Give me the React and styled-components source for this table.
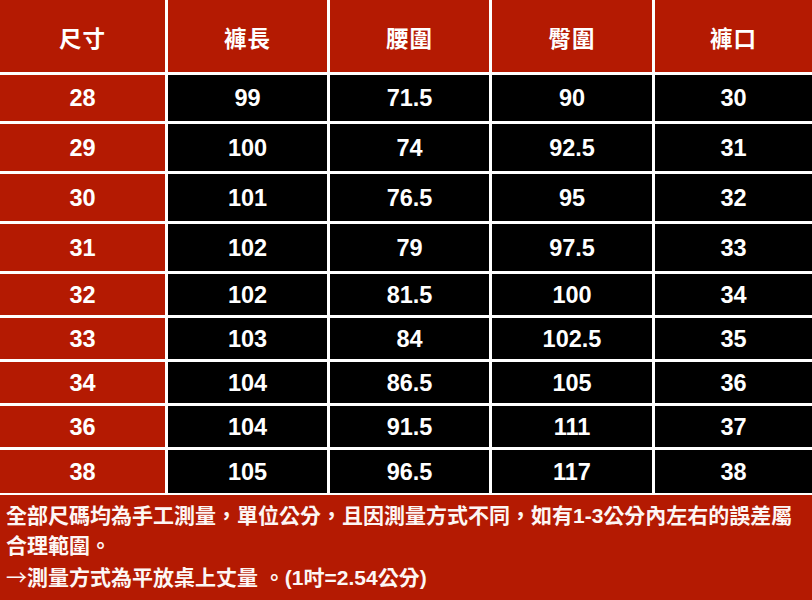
import React from 'react';
import styled, { createGlobalStyle } from 'styled-components';

const RED = '#b41a02';

const GlobalStyle = createGlobalStyle`
  html, body {
    margin: 0;
    padding: 0;
    background: ${RED};
  }
  body {
    font-family: "Liberation Sans", "Noto Sans CJK TC", sans-serif;
    -webkit-font-smoothing: antialiased;
  }
`;

const Page = styled.div`
  width: 812px;
  height: 600px;
  background: ${RED};
  display: flex;
  flex-direction: column;
  overflow: hidden;
`;

const Table = styled.div`
  display: grid;
  grid-template-columns: 165px 159px 159px 160px 1fr;
  grid-template-rows: 72px 46px 47px 47px 47px 41px 41px 41px 41px 43px;
  column-gap: 3px;
  row-gap: 3px;
  background: #fff;
  border-bottom: 2px solid #fff;
`;

const Cell = styled.div`
  display: flex;
  align-items: center;
  justify-content: center;
  background: ${p => (p.$dark ? '#000' : RED)};
  color: #fff;
  font-weight: 700;
  font-size: ${p => (p.$head ? '22.5px' : '23.5px')};
  letter-spacing: ${p => (p.$head ? '1px' : '0')};
  padding-top: 1px;
`;

const Note = styled.div`
  padding: 6px 6px 0 6px;
  color: #fdf6f4;
  font-size: 21px;
  font-weight: 700;
  line-height: 30px;
`;

const Arrow = styled.span`
  font-family: "Noto Sans CJK TC", sans-serif;
  font-weight: 400;
`;

const heads = ['尺寸', '褲長', '腰圍', '臀圍', '褲口'];

const rows = [
  ['28', '99', '71.5', '90', '30'],
  ['29', '100', '74', '92.5', '31'],
  ['30', '101', '76.5', '95', '32'],
  ['31', '102', '79', '97.5', '33'],
  ['32', '102', '81.5', '100', '34'],
  ['33', '103', '84', '102.5', '35'],
  ['34', '104', '86.5', '105', '36'],
  ['36', '104', '91.5', '111', '37'],
  ['38', '105', '96.5', '117', '38'],
];

export default function App() {
  return (
    <Page>
      <GlobalStyle />
      <Table>
        {heads.map(h => (
          <Cell key={h} $head>{h}</Cell>
        ))}
        {rows.map(r =>
          r.map((v, i) => (
            <Cell key={r[0] + '-' + i} $dark={i > 0}>{v}</Cell>
          ))
        )}
      </Table>
      <Note>
        全部尺碼均為手工測量，單位公分，且因測量方式不同，如有1-3公分內左右的誤差屬合理範圍。
        <br />
        <Arrow>→</Arrow>測量方式為平放桌上丈量 。(1吋=2.54公分)
      </Note>
    </Page>
  );
}
